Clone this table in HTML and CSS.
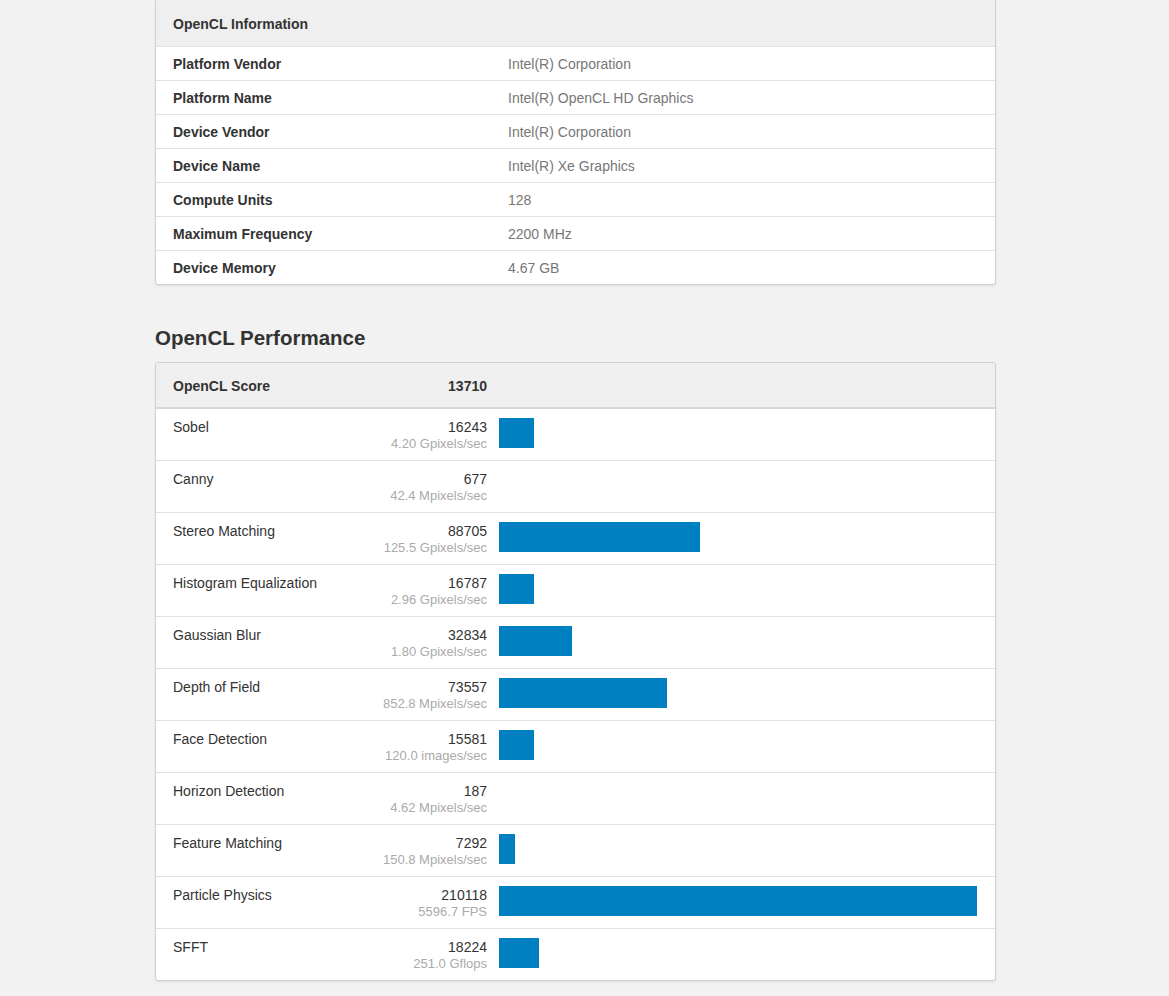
FILE: index.html
```html
<!DOCTYPE html>
<html lang="en">
<head>
<meta charset="utf-8">
<title>OpenCL</title>
<link rel="stylesheet" href="styles.css">
</head>
<body>
<main class="page">
  <section class="card info-card">
    <div class="info-head">OpenCL Information</div>
    <div class="info-row"><span class="info-key">Platform Vendor</span><span class="info-val">Intel(R) Corporation</span></div>
    <div class="info-row"><span class="info-key">Platform Name</span><span class="info-val">Intel(R) OpenCL HD Graphics</span></div>
    <div class="info-row"><span class="info-key">Device Vendor</span><span class="info-val">Intel(R) Corporation</span></div>
    <div class="info-row"><span class="info-key">Device Name</span><span class="info-val">Intel(R) Xe Graphics</span></div>
    <div class="info-row"><span class="info-key">Compute Units</span><span class="info-val">128</span></div>
    <div class="info-row"><span class="info-key">Maximum Frequency</span><span class="info-val">2200 MHz</span></div>
    <div class="info-row"><span class="info-key">Device Memory</span><span class="info-val">4.67 GB</span></div>
  </section>

  <h2 class="section-title">OpenCL Performance</h2>

  <section class="card perf-card">
    <div class="perf-head">
      <span class="perf-name">OpenCL Score</span>
      <span class="perf-total">13710</span>
      <span></span>
    </div>
    <div class="perf-row">
      <span class="perf-name">Sobel</span>
      <span class="perf-score"><span class="num">16243</span><span class="unit">4.20 Gpixels/sec</span></span>
      <span class="bar-cell"><span class="bar" style="width:35px"></span></span>
    </div>
    <div class="perf-row">
      <span class="perf-name">Canny</span>
      <span class="perf-score"><span class="num">677</span><span class="unit">42.4 Mpixels/sec</span></span>
      <span class="bar-cell"><span class="bar" style="width:0px"></span></span>
    </div>
    <div class="perf-row">
      <span class="perf-name">Stereo Matching</span>
      <span class="perf-score"><span class="num">88705</span><span class="unit">125.5 Gpixels/sec</span></span>
      <span class="bar-cell"><span class="bar" style="width:201px"></span></span>
    </div>
    <div class="perf-row">
      <span class="perf-name">Histogram Equalization</span>
      <span class="perf-score"><span class="num">16787</span><span class="unit">2.96 Gpixels/sec</span></span>
      <span class="bar-cell"><span class="bar" style="width:35px"></span></span>
    </div>
    <div class="perf-row">
      <span class="perf-name">Gaussian Blur</span>
      <span class="perf-score"><span class="num">32834</span><span class="unit">1.80 Gpixels/sec</span></span>
      <span class="bar-cell"><span class="bar" style="width:73px"></span></span>
    </div>
    <div class="perf-row">
      <span class="perf-name">Depth of Field</span>
      <span class="perf-score"><span class="num">73557</span><span class="unit">852.8 Mpixels/sec</span></span>
      <span class="bar-cell"><span class="bar" style="width:168px"></span></span>
    </div>
    <div class="perf-row">
      <span class="perf-name">Face Detection</span>
      <span class="perf-score"><span class="num">15581</span><span class="unit">120.0 images/sec</span></span>
      <span class="bar-cell"><span class="bar" style="width:35px"></span></span>
    </div>
    <div class="perf-row">
      <span class="perf-name">Horizon Detection</span>
      <span class="perf-score"><span class="num">187</span><span class="unit">4.62 Mpixels/sec</span></span>
      <span class="bar-cell"><span class="bar" style="width:0px"></span></span>
    </div>
    <div class="perf-row">
      <span class="perf-name">Feature Matching</span>
      <span class="perf-score"><span class="num">7292</span><span class="unit">150.8 Mpixels/sec</span></span>
      <span class="bar-cell"><span class="bar" style="width:16px"></span></span>
    </div>
    <div class="perf-row">
      <span class="perf-name">Particle Physics</span>
      <span class="perf-score"><span class="num">210118</span><span class="unit">5596.7 FPS</span></span>
      <span class="bar-cell"><span class="bar" style="width:478px"></span></span>
    </div>
    <div class="perf-row">
      <span class="perf-name">SFFT</span>
      <span class="perf-score"><span class="num">18224</span><span class="unit">251.0 Gflops</span></span>
      <span class="bar-cell"><span class="bar" style="width:40px"></span></span>
    </div>
  </section>
</main>
</body>
</html>
```
FILE: styles.css
```css
html, body {
  margin: 0;
  padding: 0;
}
body {
  background: #f2f2f2;
  font-family: "Liberation Sans", Arial, Helvetica, sans-serif;
  color: #333;
  font-size: 14px;
}
.page {
  width: 841px;
  margin-left: 155px;
  padding-bottom: 16px;
}
.card {
  background: #fff;
  border: 1px solid #cfcfcf;
  border-radius: 3px;
  box-shadow: 0 1px 2px rgba(0,0,0,0.08);
  overflow: hidden;
}
.info-card {
  margin-top: -1px;
}
.info-head {
  background: #efefef;
  height: 46px;
  padding: 1px 17px 0;
  box-sizing: border-box;
  display: flex;
  align-items: center;
  font-weight: bold;
  font-size: 14px;
  color: #333;
}
.info-row {
  display: flex;
  align-items: center;
  height: 33px;
  padding: 0 17px;
  border-top: 1px solid #e2e2e2;
}
.info-key {
  width: 335px;
  font-weight: bold;
  color: #333;
}
.info-val {
  color: #777;
}
.section-title {
  margin: 0;
  padding: 41px 0 12px;
  font-size: 20.5px;
  line-height: 24px;
  font-weight: bold;
  color: #333;
}
.perf-head,
.perf-row {
  display: grid;
  grid-template-columns: 227px 75px 1fr;
  column-gap: 12px;
  padding: 0 17px;
}
.perf-head {
  background: #efefef;
  height: 42px;
  padding-top: 2px;
  box-sizing: content-box;
  align-items: center;
  border-bottom: 2px solid #d6d6d6;
  font-weight: bold;
}
.perf-total {
  text-align: right;
}
.perf-row {
  padding-top: 10px;
  padding-bottom: 7px;
  border-bottom: 1px solid #e2e2e2;
  align-items: start;
}
.perf-row:last-child {
  border-bottom: 0;
}
.perf-name {
  line-height: 16px;
}
.perf-score {
  display: flex;
  flex-direction: column;
  align-items: flex-end;
  white-space: nowrap;
}
.num {
  line-height: 16px;
}
.unit {
  font-size: 13px;
  line-height: 18px;
  color: #aaa;
}
.bar-cell {
  display: block;
  margin-top: -1px;
}
.bar {
  display: block;
  height: 30px;
  background: #0080c0;
}
```
